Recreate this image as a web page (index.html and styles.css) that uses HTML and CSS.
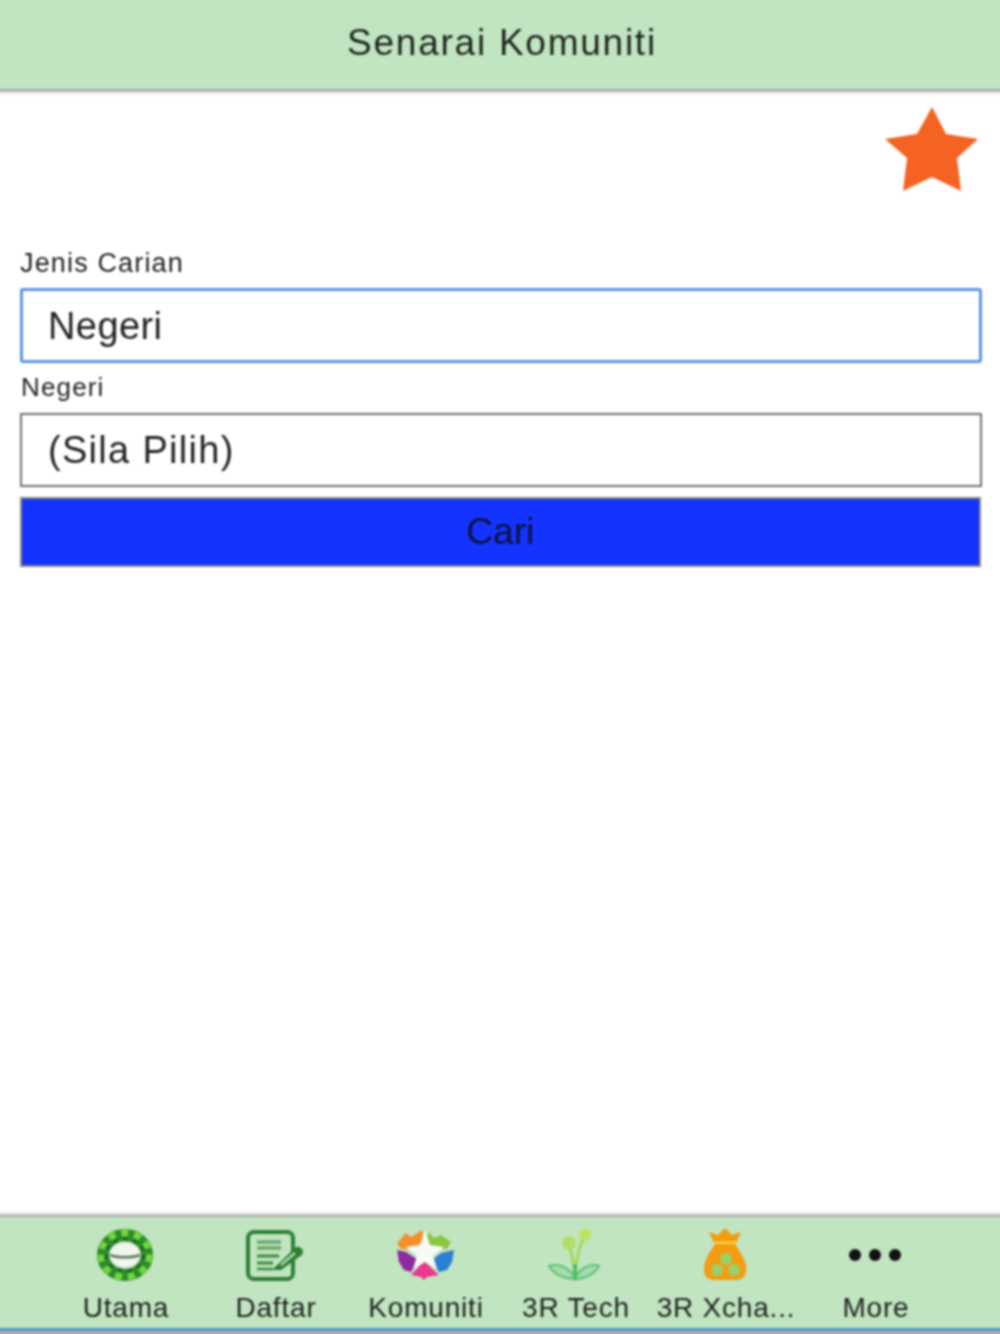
FILE: index.html
```html
<!DOCTYPE html>
<html lang="ms">

<head>
    <meta charset="utf-8">
    <title>Senarai Komuniti</title>
    <link rel="stylesheet" href="styles.css">
</head>

<body>
    <div class="page">
        <div class="header">
            <h1>Senarai Komuniti</h1>
        </div>

        <div class="content">
            <div class="star-row">
                <svg class="star" viewBox="0 0 94 84" width="94" height="84">
                    <polygon fill="#f46322" points="47,0 61,27 93,32 72,51 76,84 47,70 18,84 22,51 0,32 32,27" />
                </svg>
            </div>

            <label class="label-first" for="jenis">Jenis Carian</label>
            <select id="jenis" class="field field-focus">
                <option>Negeri</option>
            </select>

            <label class="label-second" for="negeri">Negeri</label>
            <select id="negeri" class="field field-wide">
                <option>(Sila Pilih)</option>
            </select>

            <button class="search-btn">Cari</button>
        </div>

        <div class="tabbar">
            <div class="tab">
                <svg class="tab-icon" viewBox="0 0 60 56">
                    <ellipse cx="30" cy="27" rx="22" ry="20" fill="none" stroke="#2f8a2a" stroke-width="12" />
                    <ellipse cx="30" cy="27" rx="24" ry="22" fill="none" stroke="#6fd63c" stroke-width="7" stroke-dasharray="7 6" />
                    <ellipse cx="30" cy="27" rx="19" ry="16" fill="none" stroke="#1f6b25" stroke-width="4" stroke-dasharray="5 5" />
                    <ellipse cx="30" cy="27" rx="15" ry="12" fill="#f2f5ee" />
                    <path d="M15 27 C22 30 38 30 45 27" fill="none" stroke="#5c7a55" stroke-width="2.5" />
                </svg>
                <span>Utama</span>
            </div>
            <div class="tab">
                <svg class="tab-icon" viewBox="0 0 60 56">
                    <rect x="3" y="4" width="45" height="47" rx="6" fill="none" stroke="#2f7f33" stroke-width="4" />
                    <path d="M12 14 H36 M12 20 H36" stroke="#6aa86a" stroke-width="3.5" />
                    <path d="M12 28 H34 M12 35 H28" stroke="#3b8a3f" stroke-width="3" />
                    <path d="M12 41 H28" stroke="#3b8a3f" stroke-width="2.5" />
                    <path d="M27 42 L50 20 C53 17 58 20 58 24 C58 26 56 28 54 29 L36 42 Z" fill="#2f7f33" />
                    <path d="M36 37 L50 25" stroke="#a9d8a9" stroke-width="2.5" />
                </svg>
                <span>Daftar</span>
            </div>
            <div class="tab">
                <svg class="tab-icon" viewBox="0 0 60 56">
                    <polygon fill="#f4902a" points="2,15 11,5 16,9 27,2 30,14 22,22 6,21" />
                    <polygon fill="#8cc63f" points="34,4 39,10 46,7 56,14 52,21 38,21 30,14" />
                    <polygon fill="#8e2aa0" points="2,22 11,24 23,32 16,44 9,42 4,34" />
                    <polygon fill="#2a7fd0" points="59,22 57,34 52,42 44,44 37,32 46,25" />
                    <polygon fill="#ea3a8e" points="16,47 29,33 44,47 32,49 29,52 26,49" />
                    <polygon fill="#f7fbf5" points="30,2 35,17 49,19 38,28 42,41 30,34 18,41 22,28 11,19 25,17" />
                </svg>
                <span>Komuniti</span>
            </div>
            <div class="tab">
                <svg class="tab-icon" viewBox="0 0 60 56">
                    <path d="M30 50 C29 38 28 28 24 17 M30 50 C31 36 32 24 39 9" fill="none" stroke="#a8d85a" stroke-width="3" />
                    <circle cx="24" cy="15" r="7" fill="#b2de66" />
                    <circle cx="40" cy="7" r="6" fill="#bde25c" />
                    <path d="M30 51 C20 51 8 46 4 38 C14 35 26 40 30 51 C34 40 46 35 54 38 C50 46 40 51 30 51 Z" fill="#a5dcaa" stroke="#5ec27a" stroke-width="2" />
                    <path d="M28 36 H32 V52 H28 Z" fill="#4fbf6a" />
                </svg>
                <span>3R Tech</span>
            </div>
            <div class="tab">
                <svg class="tab-icon" viewBox="0 0 60 56">
                    <path d="M14 4 L23 7 L30 0 L37 7 L46 4 L41 15 H19 Z" fill="#f39c12" />
                    <path d="M19 15 H41" stroke="#f8d23c" stroke-width="3" />
                    <path d="M20 16 H40 C46 25 52 34 51 43 C50 50 46 52 40 52 H20 C14 52 10 50 9 43 C8 34 14 25 20 16 Z" fill="#f39c12" />
                    <circle cx="31" cy="31" r="6" fill="#9ad06a" />
                    <circle cx="22" cy="42" r="6" fill="#9ad06a" />
                    <circle cx="39" cy="42" r="6" fill="#9ad06a" />
                </svg>
                <span>3R Xcha...</span>
            </div>
            <div class="tab">
                <svg class="tab-icon" viewBox="0 0 60 56">
                    <circle cx="10" cy="27" r="6" fill="#111" />
                    <circle cx="30" cy="27" r="6" fill="#111" />
                    <circle cx="50" cy="27" r="6" fill="#111" />
                </svg>
                <span>More</span>
            </div>
        </div>
        <div class="bottom-strip"></div>
    </div>
</body>

</html>
```
FILE: styles.css
```css
* {
    margin: 0;
    padding: 0;
    box-sizing: border-box;
}

body {
    font-family: "Liberation Sans", Arial, sans-serif;
    background: #fff;
    color: #222;
    overflow: hidden;
}

/* wider than the window so the blur does not fade the bars at the edges */
.page {
    display: flex;
    flex-direction: column;
    height: 1342px;
    margin: -4px -4px 0;
    filter: blur(1px);
}

.header {
    height: 93px;
    padding-top: 4px;
    display: flex;
    align-items: center;
    justify-content: center;
    background: #c0e5c0;
    box-shadow: 0 2px 4px rgba(0, 0, 0, 0.5);
}

.header h1 {
    font-size: 37px;
    font-weight: normal;
    letter-spacing: 1.75px;
    color: #1f241f;
    padding-left: 4px;
    padding-bottom: 3px;
}

.content {
    flex: 1;
    display: flex;
    flex-direction: column;
    padding: 18px 22px 0 24px;
}

.star-row {
    display: flex;
    justify-content: flex-end;
    height: 141px;
    padding-right: 3px;
}

.label-first,
.label-second {
    font-size: 27px;
    letter-spacing: 1.15px;
    line-height: 30px;
    color: #222;
}

.label-first {
    margin-bottom: 10px;
}

.label-second {
    font-size: 26px;
    line-height: 26px;
    margin-top: 11px;
    margin-left: 1px;
    margin-bottom: 13px;
}

.field {
    appearance: none;
    height: 74px;
    padding-left: 25px;
    font-family: inherit;
    font-size: 38px;
    letter-spacing: 0.4px;
    color: #222;
    background: #fff;
    border: 2px solid #6f6f6f;
}

.field-wide {
    padding-left: 26px;
    letter-spacing: 1.3px;
}

.field-focus {
    height: 75px;
    border: 3px solid #5f93e6;
    border-radius: 3px;
}

.search-btn {
    height: 70px;
    margin-top: 10px;
    margin-right: 1px;
    font-family: inherit;
    font-size: 37px;
    color: #0b1440;
    background: #1533ff;
    border: 2px solid #8a8a80;
}

.tabbar {
    height: 114px;
    display: flex;
    justify-content: center;
    background: #c0e5c0;
    border-bottom: 3px solid #4b96d8;
    box-shadow: 0 -2px 4px rgba(0, 0, 0, 0.45);
}

.bottom-strip {
    height: 7px;
    background: #b3ada3;
}

.tab {
    width: 150px;
    display: flex;
    flex-direction: column;
    align-items: center;
    padding-top: 11px;
    font-size: 28px;
    letter-spacing: 0.8px;
    color: #222;
}

.tab-icon {
    width: 60px;
    height: 56px;
    margin-bottom: 8px;
}

.tab span {
    white-space: nowrap;
    padding-left: 2px;
}
```
